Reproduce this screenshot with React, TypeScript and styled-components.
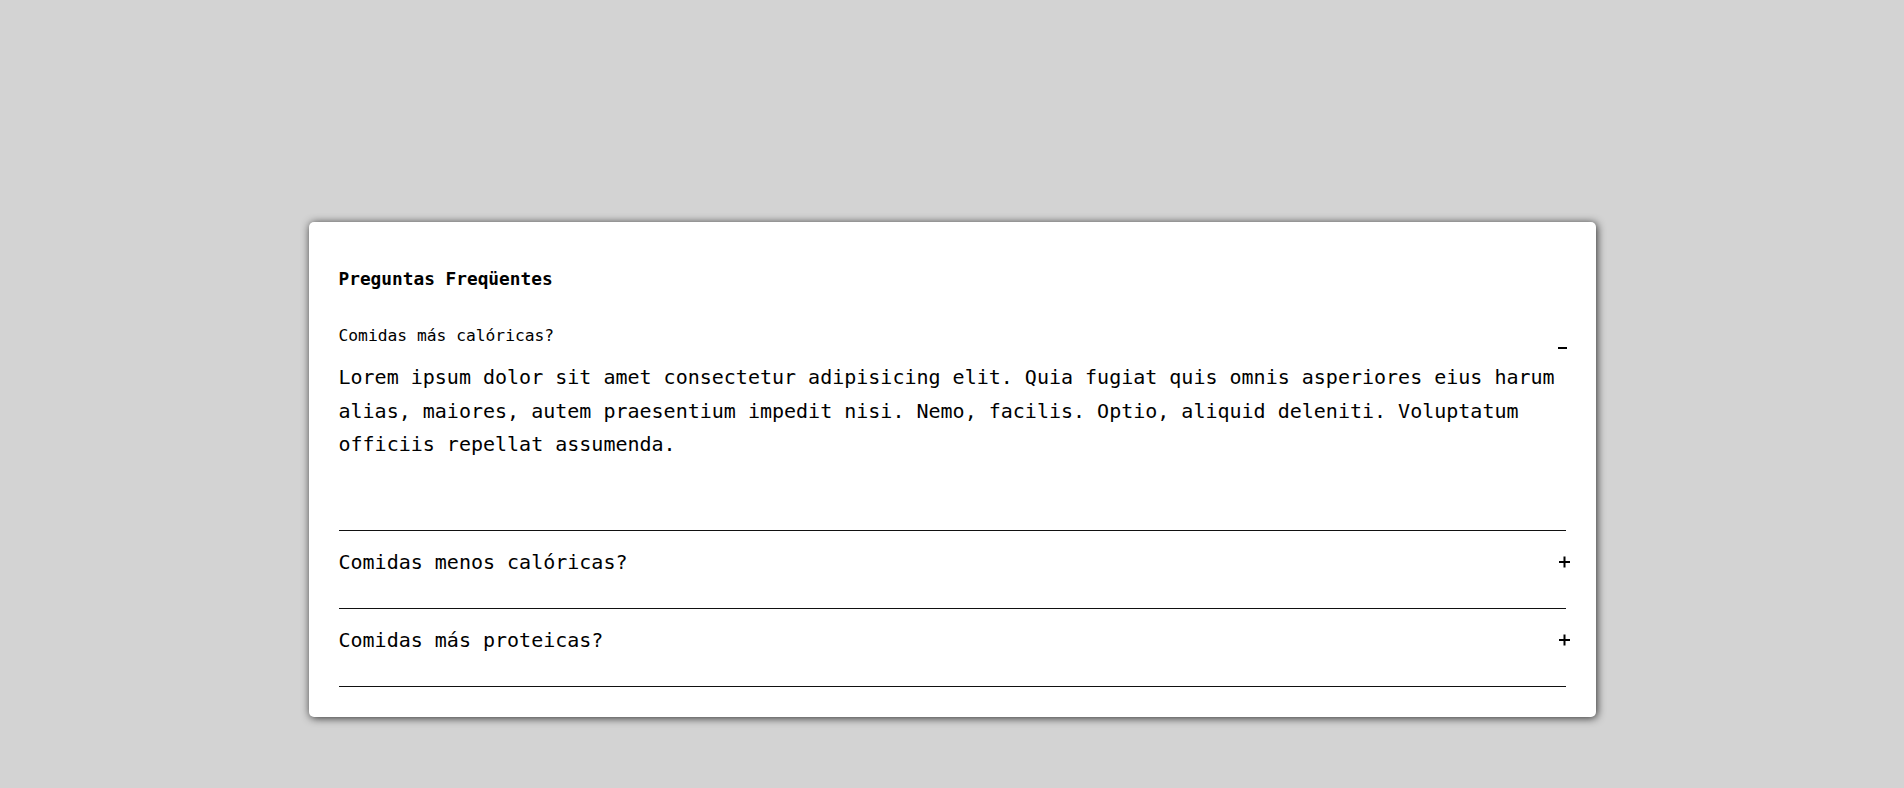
import styled, { createGlobalStyle } from 'styled-components';

const GlobalStyle = createGlobalStyle`
	html, body {
		margin: 0;
		padding: 0;
		background: #d3d3d3;
		min-height: 100%;
	}
	body {
		font-family: 'DejaVu Sans Mono', 'Liberation Mono', monospace;
		color: #000;
	}
`;

interface Faq {
	question: string;
	answer?: string;
	open?: boolean;
}

const faqs: Faq[] = [
	{
		question: 'Comidas más calóricas?',
		answer:
			'Lorem ipsum dolor sit amet consectetur adipisicing elit. Quia fugiat quis omnis asperiores eius harum alias, maiores, autem praesentium impedit nisi. Nemo, facilis. Optio, aliquid deleniti. Voluptatum officiis repellat assumenda.',
		open: true,
	},
	{ question: 'Comidas menos calóricas?' },
	{ question: 'Comidas más proteicas?' },
];

const ToggleIcon = ({ open }: { open?: boolean }) => (
	<Icon $open={open}>
		<svg width="12" height="12" viewBox="0 0 12 12">
			{open ? (
				<rect x="0" y="5" width="9" height="2" fill="#000" />
			) : (
				<>
					<rect x="1" y="5" width="11" height="2" fill="#000" />
					<rect x="5.5" y="0.5" width="2" height="11" fill="#000" />
				</>
			)}
		</svg>
	</Icon>
);

export default function App() {
	return (
		<>
			<GlobalStyle />
			<Page>
				<Card>
					<Title>Preguntas Freqüentes</Title>
					<List>
						{faqs.map((faq) => (
							<Item key={faq.question} $open={faq.open}>
								<Question $open={faq.open}>
									<QuestionText $open={faq.open}>{faq.question}</QuestionText>
									<ToggleIcon open={faq.open} />
								</Question>
								{faq.open && <Answer>{faq.answer}</Answer>}
							</Item>
						))}
					</List>
				</Card>
			</Page>
		</>
	);
}

const Page = styled.div`
	padding-top: 222px;
	padding-bottom: 71px;
`;

const Card = styled.section`
	box-sizing: border-box;
	width: 1287px;
	margin: 0 auto;
	padding: 45px 30px 30px 30px;
	background: #fff;
	border-radius: 5px;
	box-shadow: 1px 1px 9px rgba(0, 0, 0, 0.8);
`;

const Title = styled.h2`
	margin: 0;
	font-size: 17.8px;
	line-height: 24px;
	font-weight: bold;
`;

const List = styled.div`
	display: flex;
	flex-direction: column;
`;

const Item = styled.div<{ $open?: boolean }>`
	border-bottom: 1px solid #111;
	padding: ${(p) => (p.$open ? '35px 0 68.5px' : '19px 0 34px')};
`;

const Question = styled.div<{ $open?: boolean }>`
	display: flex;
	justify-content: space-between;
	align-items: ${(p) => (p.$open ? 'flex-end' : 'center')};
`;

const QuestionText = styled.span<{ $open?: boolean }>`
	font-size: ${(p) => (p.$open ? '16.3px' : '20px')};
	line-height: ${(p) => (p.$open ? '20px' : '24px')};
`;

const Icon = styled.span<{ $open?: boolean }>`
	display: flex;
	width: 12px;
	height: 12px;
	margin-right: -4px;
	margin-bottom: ${(p) => (p.$open ? '-8px' : '0')};
`;

const Answer = styled.p`
	margin: 15px 0 0;
	font-size: 20px;
	line-height: 33.5px;
`;
